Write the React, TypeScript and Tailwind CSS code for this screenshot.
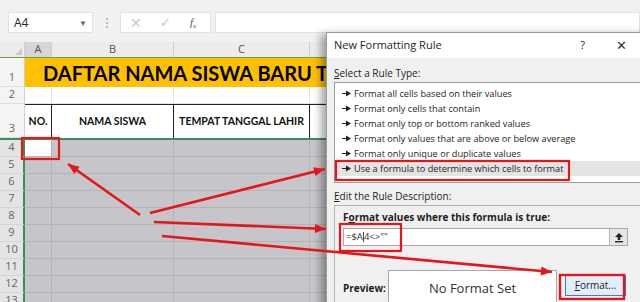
import React from 'react';

// Excel sheet with the "New Formatting Rule" dialog open, plus red markup on top.

const ui = { fontFamily: '"Open Sans", "Noto Sans", sans-serif' };
const cell = { fontFamily: 'Lato, "Open Sans", sans-serif' };

const COLS = [
  { key: 'A', w: 27 },
  { key: 'B', w: 122 },
  { key: 'C', w: 136 },
  { key: 'D', w: 120 },
];

const GRAY_ROWS = [4, 5, 6, 7, 8, 9, 10, 11, 12, 13];

const RULES = [
  'Format all cells based on their values',
  'Format only cells that contain',
  'Format only top or bottom ranked values',
  'Format only values that are above or below average',
  'Format only unique or duplicate values',
  'Use a formula to determine which cells to format',
];

function head(x1: number, y1: number, x2: number, y2: number) {
  const a = Math.atan2(y2 - y1, x2 - x1);
  const len = 11;
  const hw = 4.5;
  const bx = x2 - len * Math.cos(a);
  const by = y2 - len * Math.sin(a);
  const px = -Math.sin(a) * hw;
  const py = Math.cos(a) * hw;
  return `${x2},${y2} ${bx + px},${by + py} ${bx - px},${by - py}`;
}

const Markup = () => {
  const arrows = [
    [140, 215, 68, 164],
    [150, 213, 325, 169],
    [154, 222, 326, 229],
    [162, 236, 552, 272],
  ];
  return (
    <svg className="absolute inset-0 z-20 pointer-events-none" width={640} height={302}>
      {arrows.map(([x1, y1, x2, y2], i) => (
        <g key={i}>
          <line x1={x1} y1={y1} x2={x2} y2={y2} stroke="#e3161b" strokeWidth={2.6} />
          <polygon points={head(x1, y1, x2, y2)} fill="#e3161b" />
        </g>
      ))}
      <rect x={22} y={138} width={37} height={21} fill="none" stroke="#e3161b" strokeWidth={2.2} />
      <rect x={336} y={161} width={233} height={19} fill="none" stroke="#e3161b" strokeWidth={2.2} />
      <rect x={340} y={224} width={61} height={27} fill="none" stroke="#e3161b" strokeWidth={2.2} />
      <rect x={560} y={275} width={64} height={24} fill="none" stroke="#e3161b" strokeWidth={2.4} />
    </svg>
  );
};

const FormulaBar = () => (
  <div className="h-[42px] bg-[#f1f1f1] flex items-start pt-[12px] pl-[8px]" style={ui}>
    <div className="w-[85px] h-[21px] bg-white border border-[#e2e2e2] flex items-center justify-between px-[5px] text-[12px] text-[#222]">
      <span>A4</span>
      <span className="text-[8px] text-[#666]">▼</span>
    </div>
    <div className="w-[27px] h-[21px] flex flex-col items-center justify-center gap-[2px]">
      <span className="w-[2px] h-[2px] bg-[#bbb]" />
      <span className="w-[2px] h-[2px] bg-[#bbb]" />
      <span className="w-[2px] h-[2px] bg-[#bbb]" />
    </div>
    <div className="w-[91px] h-[21px] bg-white border border-[#e2e2e2] flex items-center pl-[9px] text-[#c8c8c8]">
      <span className="text-[14px] w-[30px]">✕</span>
      <span className="text-[13px] w-[30px]">✓</span>
      <span className="text-[11px] italic text-[#555]" style={{ fontFamily: '"Liberation Serif", serif' }}>
        f<sub className="text-[7px]">x</sub>
      </span>
    </div>
    <div className="ml-[4px] flex-1 h-[21px] bg-white border border-[#e2e2e2]" />
  </div>
);

const ColumnHeader = () => (
  <div className="flex h-[16px] bg-[#ececec] border-b border-[#6e9f45] text-[11px] text-[#555]" style={ui}>
    <div className="w-[25px] relative border-r border-[#d0d0d0]">
      <span className="absolute right-[2px] bottom-[2px] w-0 h-0 border-l-[7px] border-l-transparent border-b-[7px] border-b-[#c9c9c9]" />
    </div>
    {COLS.map((c) => (
      <div
        key={c.key}
        className={`flex items-center justify-center border-r border-[#d0d0d0] ${c.key === 'A' ? 'bg-[#d6d6d6]' : ''}`}
        style={{ width: c.w }}
      >
        {c.key}
      </div>
    ))}
  </div>
);

const RowNum = ({ n, h, sel }: { n: number; h: number; sel?: boolean }) => (
  <div
    className={`w-[25px] shrink-0 flex items-end justify-center pb-[1px] text-[11px] border-b ${
      sel ? 'bg-[#e4e4e4] text-[#666] border-[#d4d4d4] border-r-2 border-r-[#3c8b5a]' : 'bg-[#f4f4f4] text-[#666] border-[#e0e0e0] border-r border-r-[#d0d0d0]'
    }`}
    style={{ height: h, ...ui }}
  >
    {n}
  </div>
);

const Sheet = () => (
  <div className="relative">
    <ColumnHeader />
    {/* row 1 - merged title */}
    <div className="flex h-[29px]">
      <RowNum n={1} h={29} />
      <div className="flex-1 bg-[#ffc000] flex items-center pl-[18px] text-[20px] font-bold text-black whitespace-nowrap overflow-hidden" style={cell}>
        DAFTAR NAMA SISWA BARU TAHUN
      </div>
    </div>
    {/* row 2 */}
    <div className="flex h-[17px]">
      <RowNum n={2} h={17} />
      {COLS.map((c) => (
        <div key={c.key} className="bg-white border-r border-b border-[#e2e2e2]" style={{ width: c.w }} />
      ))}
    </div>
    {/* row 3 - table header */}
    <div className="flex h-[34px]">
      <RowNum n={3} h={34} />
      {['NO.', 'NAMA SISWA', 'TEMPAT TANGGAL LAHIR', ''].map((t, i) => (
        <div
          key={i}
          className="bg-white border-t border-r border-[#222] flex items-center justify-center text-[10.5px] font-bold text-[#111] whitespace-nowrap"
          style={{ width: COLS[i].w, ...cell }}
        >
          {t}
        </div>
      ))}
    </div>
    {/* rows 4..13 - selected range */}
    <div className="border-t-2 border-[#3c8b5a]">
      {GRAY_ROWS.map((n) => (
        <div key={n} className="flex h-[17px]">
          <RowNum n={n} h={17} sel />
          {COLS.map((c) => (
            <div
              key={c.key}
              className={`border-r border-b border-[#b4b3b7] ${n === 4 && c.key === 'A' ? 'bg-white' : 'bg-[#c6c5c9]'}`}
              style={{ width: c.w }}
            />
          ))}
        </div>
      ))}
    </div>
  </div>
);

const UpIcon = () => (
  <svg width="10" height="11" viewBox="0 0 10 11">
    <path d="M5 1 L9 5 H6.3 V8 H3.7 V5 H1 Z" fill="#222" />
    <rect x="1" y="9" width="8" height="1.4" fill="#222" />
  </svg>
);

const Bullet = () => (
  <svg width="10" height="7" viewBox="0 0 10 7" className="mr-[2px] shrink-0">
    <rect x="0" y="3" width="5" height="1" fill="#222" />
    <path d="M4 0.5 L9 3.5 L4 6.5 Z" fill="#222" />
  </svg>
);

const Dialog = () => (
  <div
    className="absolute left-[326px] top-[32px] w-[330px] h-[290px] bg-[#f0f0f0] border border-[#9a9a9a] z-10 shadow-[-5px_2px_8px_rgba(0,0,0,0.35)] text-[#1e1e1e]"
    style={ui}
  >
    <div className="h-[25px] bg-white flex items-center pl-[7px] pr-[28px] text-[11px]">
      <span className="flex-1">New Formatting Rule</span>
      <span className="text-[11px] mr-[31px]">?</span>
      <span className="text-[13px] text-[#333]">✕</span>
    </div>
    <div className="pl-[7px] pr-[5px] pt-[8px]">
      <div className="text-[10px] leading-[14px]">
        <span className="underline">S</span>elect a Rule Type:
      </div>
      <div className="mt-[2px] h-[101px] bg-white border border-[#9c9c9c] pt-[3px]">
        {RULES.map((r, i) => (
          <div
            key={r}
            className={`h-[15px] flex items-center pl-[7px] text-[9.2px] whitespace-nowrap ${i === RULES.length - 1 ? 'bg-[#e4e4e4]' : ''}`}
          >
            <Bullet />
            {r}
          </div>
        ))}
      </div>
      <div className="mt-[6px] text-[10px] leading-[14px]">
        <span className="underline">E</span>dit the Rule Description:
      </div>
      <div className="mt-[2px] h-[120px] border border-[#b4b4b4] pl-[8px] pt-[5px]">
        <div className="text-[10px] font-bold leading-[13px]">
          F<span className="underline">o</span>rmat values where this formula is true:
        </div>
        <div className="mt-[4px] w-[285px] h-[18px] bg-white border border-[#a8a8a8] flex items-center">
          <span className="flex-1 pl-[2px] text-[9.5px] text-[#333] whitespace-nowrap">
            =$A<span className="inline-block w-[1px] h-[10px] bg-[#444] align-middle" />4&lt;&gt;""
          </span>
          <div className="w-[18px] h-[16px] bg-[#e6e6e6] border-l border-[#b5b5b5] flex items-center justify-center">
            <UpIcon />
          </div>
        </div>
        <div className="mt-[24px] flex items-start">
          <div className="w-[45px] pt-[11px] text-[10px] font-bold">Preview:</div>
          <div className="w-[169px] h-[40px] bg-white border border-[#a8a8a8] flex items-start justify-center pt-[8px] text-[13px] text-[#333]">
            No Format Set
          </div>
          <div className="ml-[8px] mt-[5px] w-[61px] h-[21px] bg-[#e1eefb] border border-[#3c7fd1] flex items-center justify-center text-[10px]">
            <span className="underline">F</span>ormat...
          </div>
        </div>
      </div>
    </div>
  </div>
);

export default function App() {
  return (
    <div className="relative w-[640px] h-[302px] overflow-hidden bg-[#c6c5c9]">
      <FormulaBar />
      <Sheet />
      <Dialog />
      <Markup />
    </div>
  );
}
